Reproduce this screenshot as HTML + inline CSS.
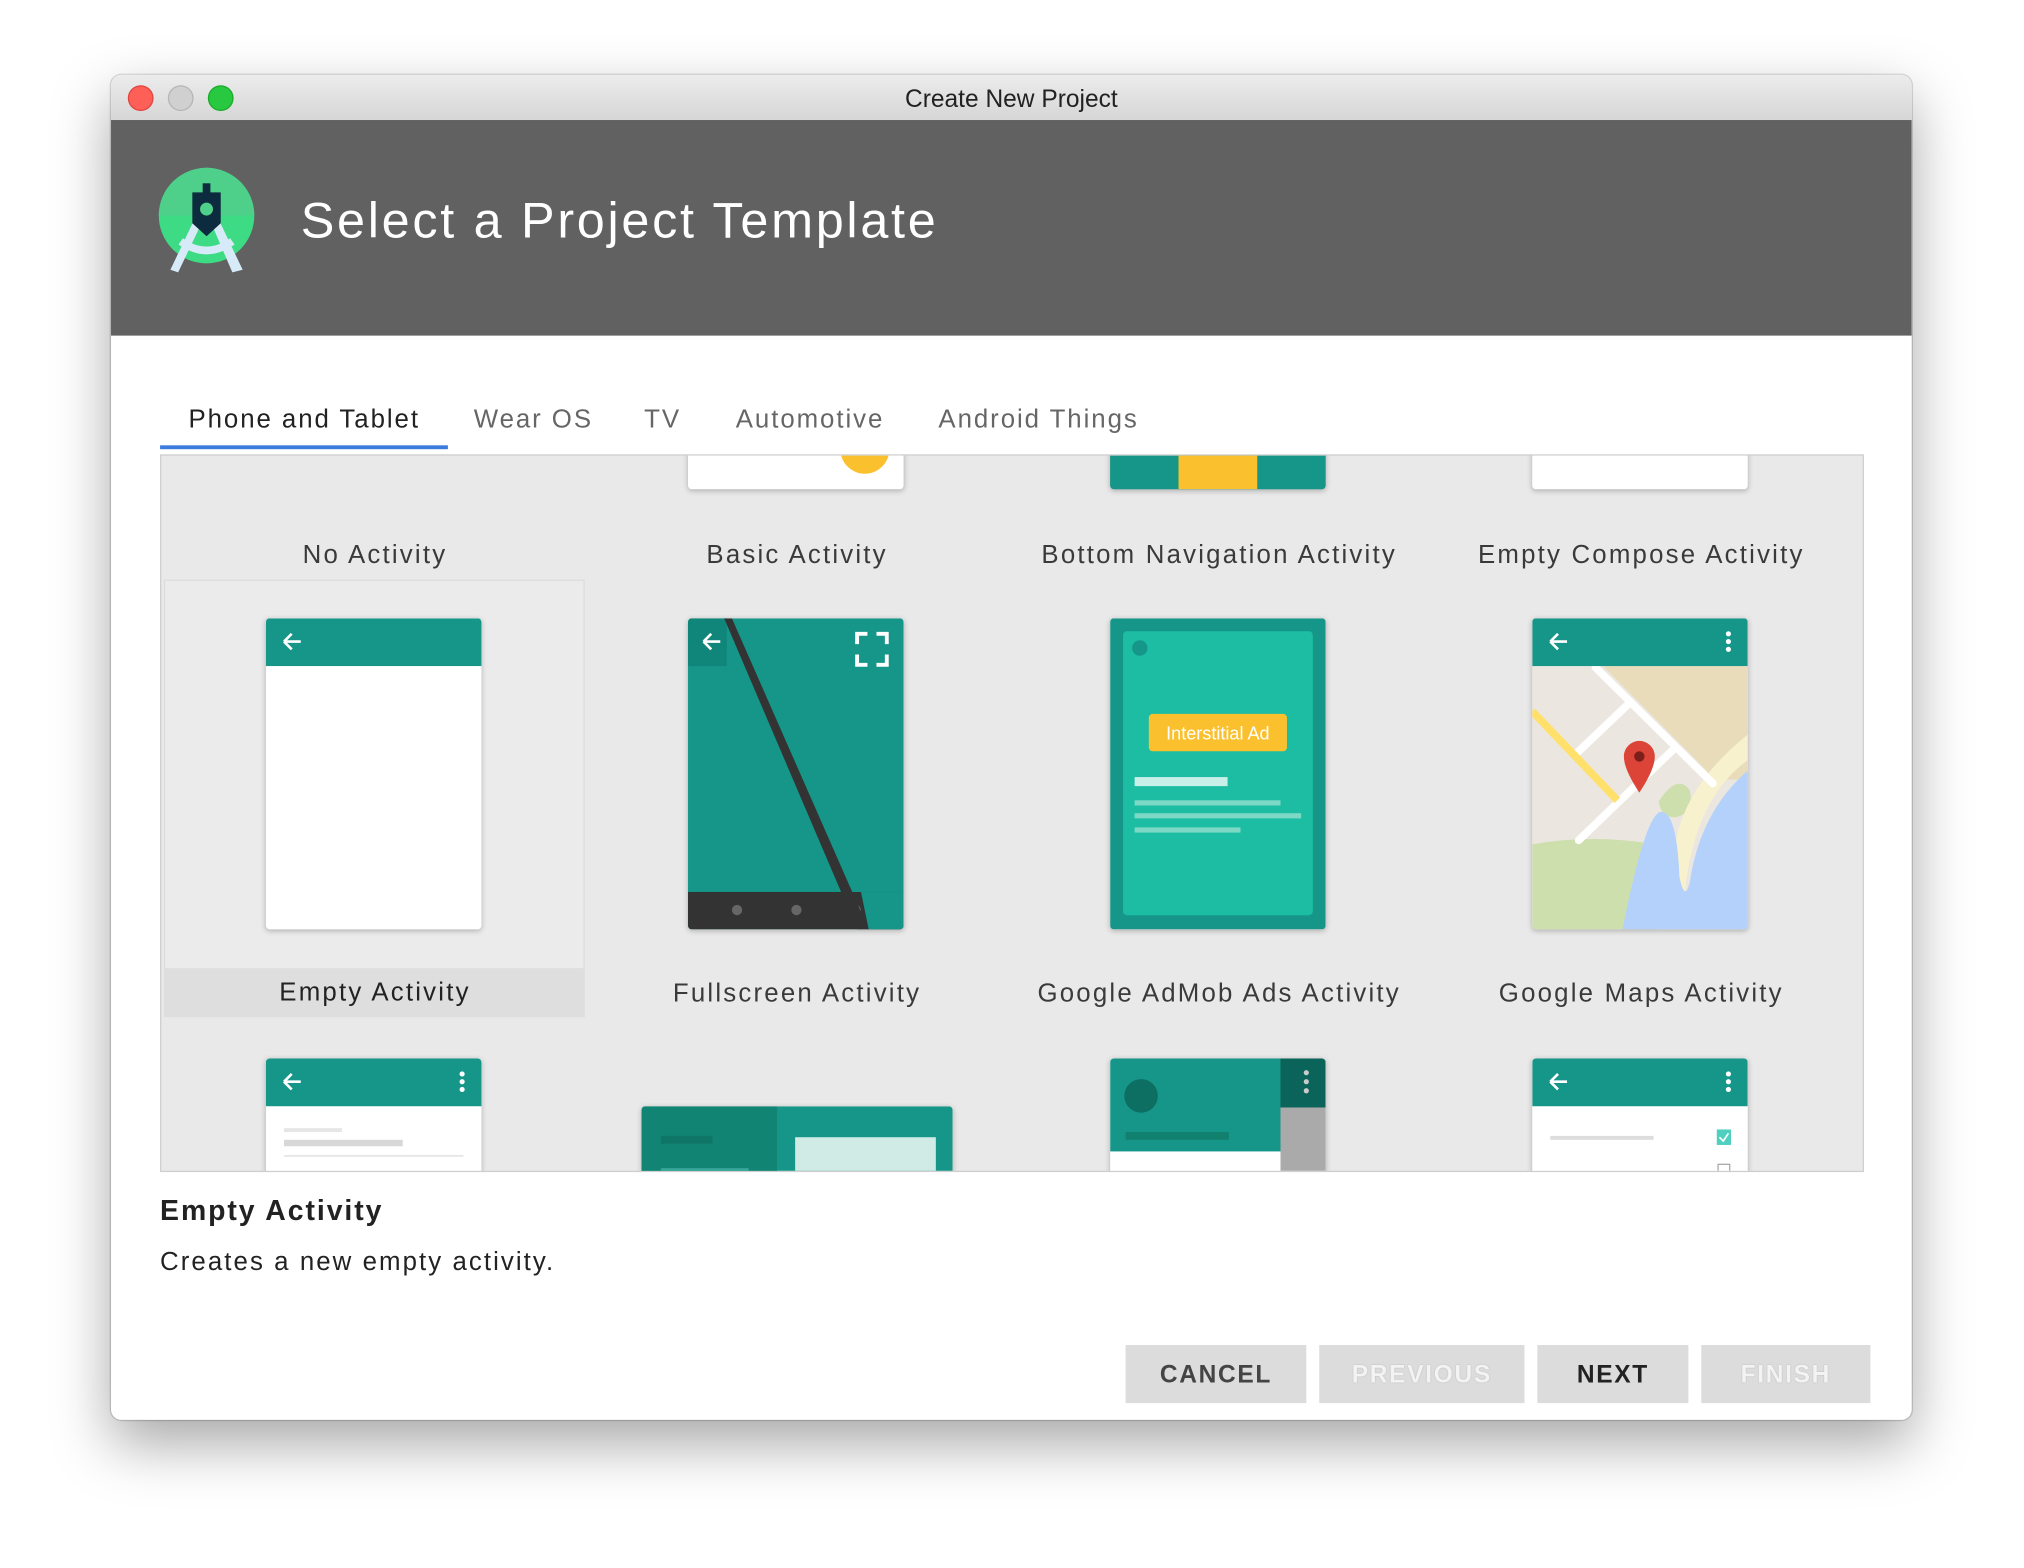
<!DOCTYPE html>
<html><head><meta charset="utf-8"><style>
html,body{margin:0;padding:0;width:2024px;height:1568px;overflow:hidden;background:#fff;}
#s{position:absolute;left:0;top:0;width:1568px;height:1215px;transform:scale(1.29082);transform-origin:0 0;font-family:"Liberation Sans",sans-serif;}
.abs{position:absolute;}
.win{left:86px;top:58px;width:1395px;height:1042px;border-radius:8px;background:#fff;box-shadow:0 18px 45px rgba(0,0,0,.35),0 0 0 1px rgba(0,0,0,.15);overflow:hidden;}
.tb{left:0;top:0;width:1395px;height:35px;background:linear-gradient(#ececec,#d6d6d6);border-bottom:1px solid #b8b8b8;}
.dot{width:18px;height:18px;border-radius:50%;top:8px;}
.hdr{left:0;top:35px;width:1395px;height:167px;background:#616161;}
.tab{top:256px;font-size:20px;color:#666;letter-spacing:1.5px;}
.grid{left:38px;top:294px;width:1318px;height:554px;background:#e9e9e9;border:1px solid #cfcfcf;overflow:hidden;}
.lbl{font-size:20px;color:#3a3a3a;letter-spacing:1.7px;text-align:center;width:327px;white-space:nowrap;}
.ph{box-shadow:0 1px 4px rgba(0,0,0,.25);border-radius:3px;overflow:hidden;}
.btn{top:984px;height:45px;background:#dcdcdc;font-weight:bold;font-size:19px;letter-spacing:1.3px;text-align:center;line-height:47px;}
</style></head><body><div id="s">
<div class="abs win">
 <div class="abs tb">
  <div class="abs dot" style="left:13px;background:#fe5f57;border:0.5px solid #e0443e"></div>
  <div class="abs dot" style="left:44px;background:#d0d0d0;border:0.5px solid #b5b5b5"></div>
  <div class="abs dot" style="left:75px;background:#28c840;border:0.5px solid #1aab29"></div>
  <div class="abs" style="left:0;width:1395px;top:9px;text-align:center;font-size:19px;color:#222">Create New Project</div>
 </div>
 <div class="abs hdr">
  <svg class="abs" style="left:36px;top:36px" width="80" height="84" viewBox="0 0 80 84">
   <circle cx="38" cy="38" r="37" fill="#3ddc84"/>
   <path d="M1 38 A37 37 0 0 1 75 38 Z" fill="#4fd08a"/>
   <path d="M10 80 L30 38 L36 40 L16 82 Z M66 80 L46 38 L40 40 L58 82Z" fill="#d6eaf8"/>
   <path d="M18 58 Q38 72 58 58" stroke="#d6eaf8" stroke-width="6" fill="none"/>
   <rect x="35" y="13" width="6" height="8" fill="#0d2b3e"/>
   <path d="M27 20 H49 V44 L38 54 L27 44Z" fill="#0d2b3e"/>
   <circle cx="38" cy="33" r="5" fill="#4fd08a"/>
  </svg>
  <div class="abs" style="left:147px;top:57px;font-size:39px;color:#fff;letter-spacing:2.1px">Select a Project Template</div>
 </div>
 <div class="abs tab" style="left:60px;color:#222">Phone and Tablet</div>
 <div class="abs tab" style="left:281px">Wear OS</div>
 <div class="abs tab" style="left:413px">TV</div>
 <div class="abs tab" style="left:484px">Automotive</div>
 <div class="abs tab" style="left:641px">Android Things</div>
 <div class="abs" style="left:38px;top:287px;width:223px;height:3px;background:#3b7be0"></div>
 <div class="abs grid">
  <div class="abs ph" style="left:408px;top:-20px;width:167px;height:46px;background:#fff"><div class="abs" style="left:118px;top:-4px;width:38px;height:38px;border-radius:50%;background:#fbc02d"></div></div>
  <div class="abs ph" style="left:735px;top:-20px;width:167px;height:46px;background:#159688"><div class="abs" style="left:53px;top:0;width:61px;height:46px;background:#fbc02d"></div></div>
  <div class="abs ph" style="left:1062px;top:-20px;width:167px;height:46px;background:#fff"></div>
  <div class="abs lbl" style="left:2px;top:66px">No Activity</div>
  <div class="abs lbl" style="left:329px;top:66px">Basic Activity</div>
  <div class="abs lbl" style="left:656px;top:66px">Bottom Navigation Activity</div>
  <div class="abs lbl" style="left:983px;top:66px">Empty Compose Activity</div>
  <div class="abs" style="left:2px;top:96px;width:326px;height:339px;background:#ebebeb;border:1px solid #dcdcdc;box-sizing:border-box"></div>
  <div class="abs" style="left:2px;top:397px;width:326px;height:38px;background:#dedede"></div>
  <div class="abs ph" style="left:81px;top:126px;width:167px;height:241px;background:#fff">
   <svg width="167" height="241"><rect width="167" height="37" fill="#159688"/><path d="M14 18 H27 M14 18 l6 -6 M14 18 l6 6" stroke="#fff" stroke-width="2" fill="none"/></svg></div>
  <div class="abs ph" style="left:408px;top:126px;width:167px;height:241px">
   <svg width="167" height="241"><rect width="167" height="241" fill="#159688"/><polygon points="0,0 30,0 30,37 0,37" fill="#10857a"/><rect y="212" width="167" height="29" fill="#333"/><circle cx="38" cy="226" r="4" fill="#666"/><circle cx="84" cy="226" r="4" fill="#666"/><circle cx="130" cy="226" r="4" fill="#666"/><polygon points="28,0 34,0 140,241 131,241" fill="#333"/><polygon points="134,212 140,241 167,241 167,212" fill="#159688"/><path d="M12 18 H25 M12 18 l6 -6 M12 18 l6 6" stroke="#fff" stroke-width="2" fill="none"/><path d="M131 20 v-8 h8 M146 12 h8 v8 M131 28 v8 h8 M146 36 h8 v-8" stroke="#fff" stroke-width="3" fill="none"/></svg></div>
  <div class="abs ph" style="left:735px;top:126px;width:167px;height:241px">
   <svg width="167" height="241"><rect width="167" height="241" fill="#159688"/><rect x="10" y="10" width="147" height="220" rx="3" fill="#1dbda3"/><circle cx="23" cy="23" r="6" fill="#159688"/><rect x="30" y="74" width="107" height="29" rx="3" fill="#fbc02d"/><text x="83.5" y="94" text-anchor="middle" font-size="14" fill="#fff" font-family="Liberation Sans">Interstitial Ad</text><rect x="19" y="123" width="72" height="7" fill="#c8f0e8"/><rect x="19" y="141" width="113" height="4" fill="#7dd9c6"/><rect x="19" y="151" width="129" height="4" fill="#7dd9c6"/><rect x="19" y="162" width="82" height="4" fill="#7dd9c6"/></svg></div>
  <div class="abs ph" style="left:1062px;top:126px;width:167px;height:241px">
   <svg width="167" height="241"><rect width="167" height="241" fill="#ebe6df"/><polygon points="55,37 167,37 167,125 142,125" fill="#e8dcbb"/><path d="M98 142 Q112 120 122 133 Q126 150 112 154 Q100 155 98 142" fill="#cddfac"/><path d="M0 175 Q60 165 118 180 L100 241 L0 241Z" fill="#cddfac"/><path d="M167 110 Q125 140 118 215 Q114 230 110 200 Q105 140 167 90Z" fill="#f8f1cd"/><path d="M167 118 Q130 150 122 205 Q118 220 114 200 Q112 150 100 150 Q88 150 70 241 L167 241Z" fill="#b3d1fb"/><path d="M49 38 L140 128 M35 104 L76 65 M36 172 L111 100" stroke="#fff" stroke-width="6" stroke-linecap="round"/><path d="M0 72 L66 141" stroke="#ffe06b" stroke-width="6"/><path d="M71 107 A12 12 0 0 1 95 107 Q95 117 83 135 Q71 117 71 107Z" fill="#db4437"/><circle cx="83" cy="107" r="4" fill="#7a1f1a"/><rect width="167" height="37" fill="#159688"/><path d="M14 18 H27 M14 18 l6 -6 M14 18 l6 6" stroke="#fff" stroke-width="2" fill="none"/><circle cx="152" cy="12" r="2" fill="#fff"/><circle cx="152" cy="18" r="2" fill="#fff"/><circle cx="152" cy="24" r="2" fill="#fff"/></svg></div>
  <div class="abs lbl" style="left:2px;top:405px;color:#222">Empty Activity</div>
  <div class="abs lbl" style="left:329px;top:406px">Fullscreen Activity</div>
  <div class="abs lbl" style="left:656px;top:406px">Google AdMob Ads Activity</div>
  <div class="abs lbl" style="left:983px;top:406px">Google Maps Activity</div>
  <div class="abs ph" style="left:81px;top:467px;width:167px;height:100px;background:#fff">
   <svg width="167" height="100"><rect width="167" height="37" fill="#159688"/><path d="M14 18 H27 M14 18 l6 -6 M14 18 l6 6" stroke="#fff" stroke-width="2" fill="none"/><circle cx="152" cy="12" r="2" fill="#fff"/><circle cx="152" cy="18" r="2" fill="#fff"/><circle cx="152" cy="24" r="2" fill="#fff"/><rect x="14" y="54" width="45" height="3" fill="#e6e6e6"/><rect x="14" y="63" width="92" height="5" fill="#d8d8d8"/><rect x="14" y="75" width="139" height="1" fill="#ddd"/></svg></div>
  <div class="abs ph" style="left:372px;top:504px;width:241px;height:80px">
   <svg width="241" height="80"><rect width="241" height="80" fill="#159688"/><rect width="105" height="52" fill="#118474"/><rect x="15" y="23" width="40" height="6" fill="#0f7566"/><rect x="119" y="24" width="109" height="60" fill="#d0ebe6"/><rect x="15" y="48" width="68" height="4" fill="#3aa89b"/></svg></div>
  <div class="abs ph" style="left:735px;top:467px;width:167px;height:100px">
   <svg width="167" height="100"><rect width="167" height="100" fill="#fff"/><rect width="132" height="72" fill="#159688"/><rect x="132" width="35" height="38" fill="#0b6459"/><rect x="132" y="38" width="35" height="62" fill="#aaa"/><circle cx="24" cy="29" r="13" fill="#0d6e62"/><rect x="12" y="57" width="80" height="6" fill="#11806f"/><circle cx="152" cy="11" r="2" fill="#ccc"/><circle cx="152" cy="18" r="2" fill="#ccc"/><circle cx="152" cy="25" r="2" fill="#ccc"/></svg></div>
  <div class="abs ph" style="left:1062px;top:467px;width:167px;height:100px;background:#fff">
   <svg width="167" height="100"><rect width="167" height="37" fill="#159688"/><path d="M14 18 H27 M14 18 l6 -6 M14 18 l6 6" stroke="#fff" stroke-width="2" fill="none"/><circle cx="152" cy="12" r="2" fill="#fff"/><circle cx="152" cy="18" r="2" fill="#fff"/><circle cx="152" cy="24" r="2" fill="#fff"/><rect x="14" y="60" width="80" height="3" fill="#ddd"/><rect x="143" y="55" width="11" height="12" fill="#4fcfbf"/><path d="M145 61 l3 3 l4 -6" stroke="#fff" stroke-width="1.3" fill="none"/><rect x="144" y="82" width="9" height="9" fill="none" stroke="#aaa"/></svg></div>
 </div>
 <div class="abs" style="left:38px;top:867px;font-size:22px;font-weight:bold;color:#222;letter-spacing:1.5px">Empty Activity</div>
 <div class="abs" style="left:38px;top:909px;font-size:20px;color:#222;letter-spacing:1.6px">Creates a new empty activity.</div>
 <div class="abs btn" style="left:786px;width:140px;color:#444">CANCEL</div>
 <div class="abs btn" style="left:936px;width:159px;color:#f3f3f3;text-shadow:0 0 1px #aaa">PREVIOUS</div>
 <div class="abs btn" style="left:1105px;width:117px;color:#222">NEXT</div>
 <div class="abs btn" style="left:1232px;width:131px;color:#f3f3f3;text-shadow:0 0 1px #aaa">FINISH</div>
</div>
</div></body></html>
